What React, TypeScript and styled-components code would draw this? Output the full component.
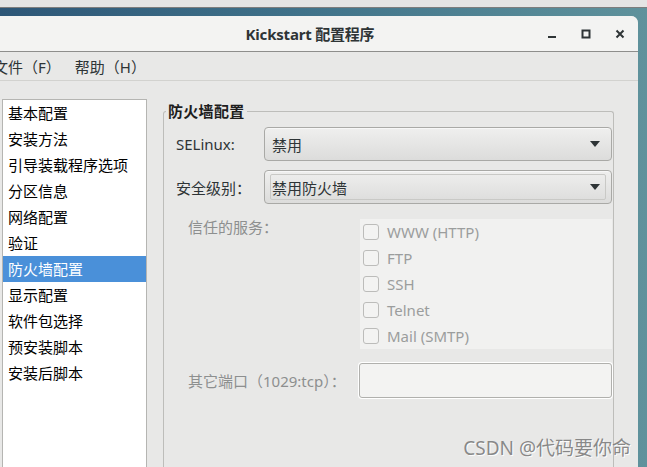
import React from 'react';
import styled, { createGlobalStyle } from 'styled-components';

const GlobalStyle = createGlobalStyle`
  html, body {
    margin: 0;
    padding: 0;
    overflow: hidden;
    background: #e5e5e5;
  }
  * {
    box-sizing: border-box;
  }
`;

const FONT = `"Noto Sans", "Noto Sans CJK SC", sans-serif`;

const Screen = styled.div`
  position: relative;
  width: 647px;
  height: 467px;
  display: flex;
  flex-direction: column;
  overflow: hidden;
  font-family: ${FONT};
  font-size: 15px;
`;

const TopStrip = styled.div`
  height: 8px;
  flex: none;
  background: #e4e4e4;
  border-bottom: 1px solid #7d7d7d;
`;

const Desktop = styled.div`
  flex: 1;
  display: flex;
  padding-top: 8px;
  background: linear-gradient(90deg, #2d5677 0%, #3f7189 45%, #5f929c 100%);
  min-height: 0;
`;

const Window = styled.div`
  margin-left: -18px;
  width: 656px;
  flex: none;
  display: flex;
  flex-direction: column;
  background: #e8e8e7;
  border-top-right-radius: 7px;
  overflow: hidden;
`;

const TitleBar = styled.div`
  position: relative;
  height: 36px;
  flex: none;
  display: flex;
  align-items: center;
  justify-content: center;
  background: #f3f3f2;
  border-bottom: 1px solid #8e8e8c;
`;

const Title = styled.div`
  font-size: 15px;
  font-weight: bold;
  color: #2e3436;
  letter-spacing: -0.2px;
`;

const WinButtons = styled.div`
  position: absolute;
  right: 8px;
  top: 0;
  bottom: 0;
  display: flex;
  align-items: center;
  gap: 14px;
`;

const WinButton = styled.div`
  width: 20px;
  height: 20px;
  display: flex;
  align-items: center;
  justify-content: center;
  color: #2e3436;
`;

const MenuBar = styled.div`
  height: 29px;
  flex: none;
  display: flex;
  align-items: center;
  padding-left: 11px;
  gap: 14px;
  background: #e8e8e7;
  border-bottom: 1px solid #d2d2cf;
`;

const MenuItem = styled.div`
  color: #2e3436;
  font-size: 15px;
`;

const Body = styled.div`
  flex: 1;
  display: flex;
  padding: 18px 0 0 20px;
  min-height: 0;
`;

const Sidebar = styled.div`
  width: 145px;
  flex: none;
  background: #ffffff;
  border: 1px solid #b5b5b2;
  border-bottom: none;
`;

const ListItem = styled.div<{ $active?: boolean }>`
  height: 26px;
  line-height: 26px;
  padding-left: 5px;
  font-size: 15px;
  color: ${(p) => (p.$active ? '#ffffff' : '#000000')};
  background: ${(p) => (p.$active ? '#4a90d9' : 'transparent')};
  white-space: nowrap;
`;

const Main = styled.div`
  flex: 1;
  padding-left: 16px;
  padding-right: 24px;
  margin-top: 3px;
`;

const Frame = styled.fieldset`
  margin: 0;
  height: 400px;
  border: 1px solid #bdbdba;
  border-bottom: none;
  border-radius: 3px 3px 0 0;
  padding: 7px 1px 0 12px;
`;

const Legend = styled.legend`
  font-weight: bold;
  font-size: 15px;
  color: #1d1d1d;
  padding: 0 2px;
  margin-left: -10px;
  line-height: 18px;
  letter-spacing: 0.3px;
`;

const FieldRow = styled.div`
  display: flex;
  align-items: center;
  margin-bottom: 9px;
`;

const FieldLabel = styled.div`
  width: 88px;
  flex: none;
  color: #2e3436;
  font-size: 15px;
`;

const Combo = styled.div<{ $focus?: boolean }>`
  position: relative;
  flex: 1;
  height: 34px;
  display: flex;
  align-items: center;
  padding: 0 11px 0 7px;
  border: 1px solid #a9a9a6;
  border-radius: 4px;
  background: linear-gradient(#efefee, #dcdcdb);
  box-shadow: inset 0 1px #f7f7f7;
  color: #2e3436;
  font-size: 15px;
  &::before {
    content: '';
    display: ${(p) => (p.$focus ? 'block' : 'none')};
    position: absolute;
    left: 5px;
    right: 5px;
    top: 3px;
    bottom: 3px;
    border: 1px solid #c9c9c6;
    border-radius: 2px;
  }
`;

const ComboText = styled.span`
  flex: 1;
`;

const Arrow = styled.span`
  width: 0;
  height: 0;
  border-left: 5px solid transparent;
  border-right: 5px solid transparent;
  border-top: 6px solid #2e3436;
`;

const Services = styled.div`
  display: flex;
  margin-top: 15px;
  padding-left: 12px;
`;

const ServicesLabel = styled.div`
  width: 172px;
  flex: none;
  margin-top: -1px;
  color: #8d8f8f;
  font-size: 15px;
  line-height: 18px;
`;

const CheckPanel = styled.div`
  flex: 1;
  background: #f1f1f0;
  padding: 0 0 0 3px;
`;

const CheckRow = styled.div`
  height: 26px;
  display: flex;
  align-items: center;
  gap: 8px;
  color: #9b9d9d;
  font-size: 15px;
`;

const Box = styled.span`
  width: 16px;
  height: 16px;
  border: 1px solid #bcbcba;
  border-radius: 3px;
  background: #f3f3f2;
`;

const PortRow = styled.div`
  display: flex;
  align-items: center;
  margin-top: 14px;
  padding-left: 12px;
`;

const PortLabel = styled.div`
  width: 171px;
  flex: none;
  color: #8d8f8f;
  font-size: 15px;
`;

const Entry = styled.div`
  flex: 1;
  height: 35px;
  border: 1px solid #b0b0ad;
  border-radius: 3px;
  background: #f3f3f2;
  box-shadow: 0 0 0 1px #ffffff;
`;

const DesktopRight = styled.div`
  flex: 1;
`;

const Watermark = styled.div`
  position: absolute;
  right: 16px;
  bottom: 6px;
  font-family: ${FONT};
  font-size: 19px;
  color: rgba(118, 118, 118, 0.85);
  text-shadow: 1px 1px 0 rgba(255, 255, 255, 0.9);
`;

const navItems = [
  '基本配置',
  '安装方法',
  '引导装载程序选项',
  '分区信息',
  '网络配置',
  '验证',
  '防火墙配置',
  '显示配置',
  '软件包选择',
  '预安装脚本',
  '安装后脚本',
];

const services = ['WWW (HTTP)', 'FTP', 'SSH', 'Telnet', 'Mail (SMTP)'];

export default function App() {
  return (
    <>
      <GlobalStyle />
      <Screen>
        <TopStrip />
        <Desktop>
          <Window>
            <TitleBar>
              <Title>Kickstart 配置程序</Title>
              <WinButtons>
                <WinButton>
                  <svg width="10" height="10" viewBox="0 0 10 10">
                    <rect x="1" y="7" width="8" height="2" fill="currentColor" />
                  </svg>
                </WinButton>
                <WinButton>
                  <svg width="10" height="10" viewBox="0 0 10 10">
                    <rect x="1.5" y="1.5" width="7" height="7" fill="none" stroke="currentColor" strokeWidth="2" />
                  </svg>
                </WinButton>
                <WinButton>
                  <svg width="10" height="10" viewBox="0 0 10 10">
                    <path d="M1.5 1.5 L8.5 8.5 M8.5 1.5 L1.5 8.5" stroke="currentColor" strokeWidth="2" />
                  </svg>
                </WinButton>
              </WinButtons>
            </TitleBar>
            <MenuBar>
              <MenuItem>文件（F）</MenuItem>
              <MenuItem>帮助（H）</MenuItem>
            </MenuBar>
            <Body>
              <Sidebar>
                {navItems.map((item) => (
                  <ListItem key={item} $active={item === '防火墙配置'}>
                    {item}
                  </ListItem>
                ))}
              </Sidebar>
              <Main>
                <Frame>
                  <Legend>防火墙配置</Legend>
                  <FieldRow>
                    <FieldLabel>SELinux:</FieldLabel>
                    <Combo>
                      <ComboText>禁用</ComboText>
                      <Arrow />
                    </Combo>
                  </FieldRow>
                  <FieldRow>
                    <FieldLabel>安全级别：</FieldLabel>
                    <Combo $focus>
                      <ComboText>禁用防火墙</ComboText>
                      <Arrow />
                    </Combo>
                  </FieldRow>
                  <Services>
                    <ServicesLabel>信任的服务：</ServicesLabel>
                    <CheckPanel>
                      {services.map((s) => (
                        <CheckRow key={s}>
                          <Box />
                          {s}
                        </CheckRow>
                      ))}
                    </CheckPanel>
                  </Services>
                  <PortRow>
                    <PortLabel>其它端口（1029:tcp）：</PortLabel>
                    <Entry />
                  </PortRow>
                </Frame>
              </Main>
            </Body>
          </Window>
          <DesktopRight />
        </Desktop>
        <Watermark>CSDN @代码要你命</Watermark>
      </Screen>
    </>
  );
}
